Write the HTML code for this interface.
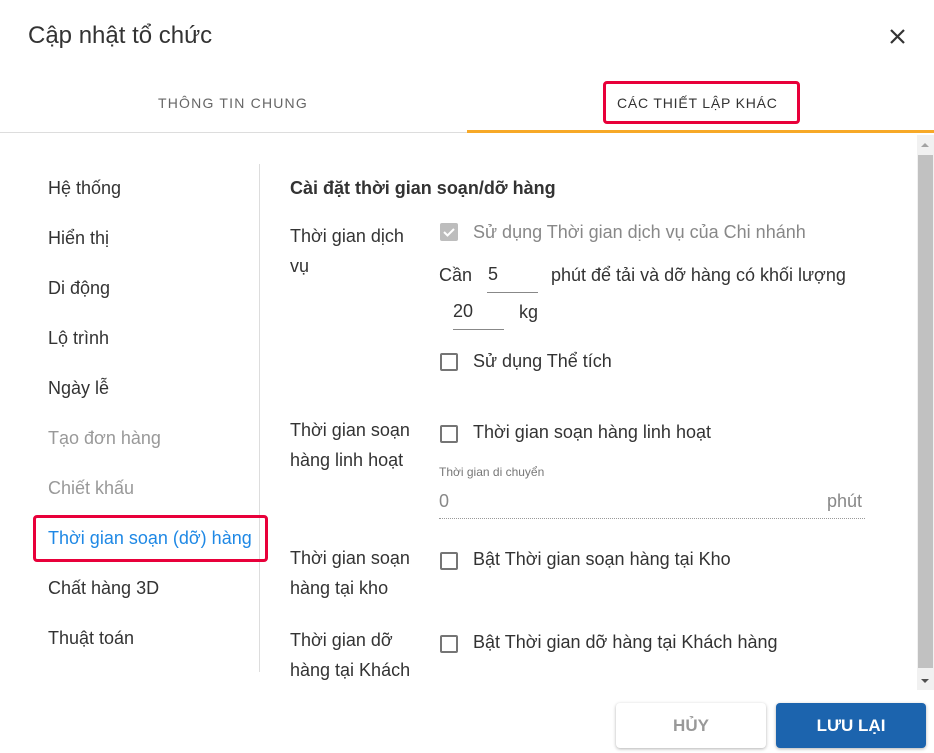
<!DOCTYPE html>
<html><head><meta charset="utf-8"><style>
*{box-sizing:border-box;margin:0;padding:0}
body{width:934px;height:753px;background:#fff;font-family:"Liberation Sans",sans-serif;color:#333;position:relative;overflow:hidden}
.a{position:absolute;white-space:nowrap}
.m{font-size:18px;color:#333;left:48px}
.l{font-size:18px;color:#333;left:290px;line-height:30px}
.t{font-size:18px;color:#333}
.cb{position:absolute;width:18px;height:18px;border:2px solid #757575;border-radius:2px}
.u{position:absolute;height:1px;background:#888}
</style></head><body>
<div class="a" style="left:28px;top:22px;font-size:24px;color:#333">Cập nhật tổ chức</div>
<svg class="a" style="left:889px;top:28px" width="17" height="17" viewBox="0 0 17 17"><path d="M2 2L15 15M15 2L2 15" stroke="#333" stroke-width="2.2"/></svg>
<div class="a" style="left:158px;top:95px;font-size:14px;letter-spacing:1.2px;color:#666">THÔNG TIN CHUNG</div>
<div class="a" style="left:603px;top:81px;width:197px;height:43px;border:3px solid #e8003a;border-radius:4px"></div>
<div class="a" style="left:617px;top:95px;font-size:14px;letter-spacing:.8px;color:#333">CÁC THIẾT LẬP KHÁC</div>
<div class="a" style="left:0;top:132px;width:934px;height:1px;background:#ddd"></div>
<div class="a" style="left:467px;top:130px;width:467px;height:3px;background:#f7a928"></div>
<div class="a" style="left:259px;top:164px;width:1px;height:508px;background:#ddd"></div>
<div class="a m" style="top:178px">Hệ thống</div>
<div class="a m" style="top:228px">Hiển thị</div>
<div class="a m" style="top:278px">Di động</div>
<div class="a m" style="top:328px">Lộ trình</div>
<div class="a m" style="top:378px">Ngày lễ</div>
<div class="a m" style="top:428px;color:#999">Tạo đơn hàng</div>
<div class="a m" style="top:478px;color:#999">Chiết khấu</div>
<div class="a" style="left:33px;top:515px;width:235px;height:47px;border:3px solid #e8003a;border-radius:4px"></div>
<div class="a m" style="top:528px;color:#1e88e5">Thời gian soạn (dỡ) hàng</div>
<div class="a m" style="top:578px">Chất hàng 3D</div>
<div class="a m" style="top:628px">Thuật toán</div>
<div class="a" style="left:290px;top:178px;font-size:18px;font-weight:bold;color:#333">Cài đặt thời gian soạn/dỡ hàng</div>
<div class="a l" style="top:221px">Thời gian dịch<br>vụ</div>
<div class="a" style="left:440px;top:223px;width:18px;height:18px;background:#bdbdbd;border-radius:2px"></div>
<svg class="a" style="left:440px;top:223px" width="18" height="18"><path d="M4 9l3.5 3.5L14 6" stroke="#fff" stroke-width="2" fill="none"/></svg>
<div class="a t" style="left:473px;top:222px;color:#888">Sử dụng Thời gian dịch vụ của Chi nhánh</div>
<div class="a t" style="left:439px;top:265px">Cần</div>
<div class="a t" style="left:488px;top:264px">5</div>
<div class="u" style="left:487px;top:292px;width:51px"></div>
<div class="a t" style="left:551px;top:265px">phút để tải và dỡ hàng có khối lượng</div>
<div class="a t" style="left:453px;top:301px">20</div>
<div class="u" style="left:453px;top:329px;width:51px"></div>
<div class="a t" style="left:519px;top:302px">kg</div>
<div class="cb" style="left:440px;top:353px"></div>
<div class="a t" style="left:473px;top:351px">Sử dụng Thể tích</div>
<div class="a l" style="top:415px">Thời gian soạn<br>hàng linh hoạt</div>
<div class="cb" style="left:440px;top:425px"></div>
<div class="a t" style="left:473px;top:422px">Thời gian soạn hàng linh hoạt</div>
<div class="a" style="left:439px;top:465px;font-size:12px;color:#777">Thời gian di chuyển</div>
<div class="a t" style="left:439px;top:491px;color:#888">0</div>
<div class="a t" style="left:827px;top:491px;color:#888">phút</div>
<div class="a" style="left:439px;top:518px;width:426px;border-top:1px dotted #999"></div>
<div class="a l" style="top:543px">Thời gian soạn<br>hàng tại kho</div>
<div class="cb" style="left:440px;top:552px"></div>
<div class="a t" style="left:473px;top:549px">Bật Thời gian soạn hàng tại Kho</div>
<div class="a" style="left:290px;top:625px;width:140px;height:65px;overflow:hidden"><div class="l" style="position:static;white-space:nowrap">Thời gian dỡ<br>hàng tại Khách<br>hàng</div></div>
<div class="cb" style="left:440px;top:635px"></div>
<div class="a t" style="left:473px;top:632px">Bật Thời gian dỡ hàng tại Khách hàng</div>
<div class="a" style="left:917px;top:135px;width:17px;height:555px;background:#f1f1f1"></div>
<div class="a" style="left:918px;top:155px;width:15px;height:513px;background:#c1c1c1"></div>
<svg class="a" style="left:920px;top:141px" width="10" height="8"><path d="M1 6L5 2L9 6Z" fill="#a3a3a3"/></svg>
<svg class="a" style="left:920px;top:677px" width="10" height="8"><path d="M1 2L5 6L9 2Z" fill="#505050"/></svg>
<div class="a" style="left:616px;top:703px;width:150px;height:45px;background:#fff;border-radius:4px;box-shadow:0 1px 3px rgba(0,0,0,.3);text-align:center;line-height:45px;font-size:17px;font-weight:bold;color:#999">HỦY</div>
<div class="a" style="left:776px;top:703px;width:150px;height:45px;background:#1c64ae;border-radius:4px;box-shadow:0 1px 3px rgba(0,0,0,.3);text-align:center;line-height:45px;font-size:17px;font-weight:bold;color:#fff">LƯU LẠI</div>
</body></html>
